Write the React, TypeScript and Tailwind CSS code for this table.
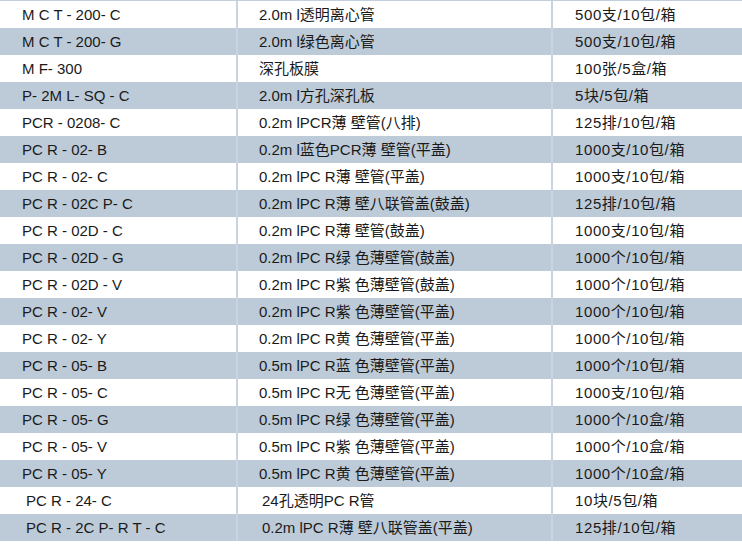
import React from "react";

const rows: [string, string, string][] = [
  ["M C T - 200- C", "2.0m l透明离心管", "500支/10包/箱"],
  ["M C T - 200- G", "2.0m l绿色离心管", "500支/10包/箱"],
  ["M F- 300", "深孔板膜", "100张/5盒/箱"],
  ["P- 2M L- SQ - C", "2.0m l方孔深孔板", "5块/5包/箱"],
  ["PCR - 0208- C", "0.2m lPCR薄 壁管(八排)", "125排/10包/箱"],
  ["PC R - 02- B", "0.2m l蓝色PCR薄 壁管(平盖)", "1000支/10包/箱"],
  ["PC R - 02- C", "0.2m lPC R薄 壁管(平盖)", "1000支/10包/箱"],
  ["PC R - 02C P- C", "0.2m lPC R薄 壁八联管盖(鼓盖)", "125排/10包/箱"],
  ["PC R - 02D - C", "0.2m lPC R薄 壁管(鼓盖)", "1000支/10包/箱"],
  ["PC R - 02D - G", "0.2m lPC R绿 色薄壁管(鼓盖)", "1000个/10包/箱"],
  ["PC R - 02D - V", "0.2m lPC R紫 色薄壁管(鼓盖)", "1000个/10包/箱"],
  ["PC R - 02- V", "0.2m lPC R紫 色薄壁管(平盖)", "1000个/10包/箱"],
  ["PC R - 02- Y", "0.2m lPC R黄 色薄壁管(平盖)", "1000个/10包/箱"],
  ["PC R - 05- B", "0.5m lPC R蓝 色薄壁管(平盖)", "1000个/10包/箱"],
  ["PC R - 05- C", "0.5m lPC R无 色薄壁管(平盖)", "1000支/10包/箱"],
  ["PC R - 05- G", "0.5m lPC R绿 色薄壁管(平盖)", "1000个/10盒/箱"],
  ["PC R - 05- V", "0.5m lPC R紫 色薄壁管(平盖)", "1000个/10盒/箱"],
  ["PC R - 05- Y", "0.5m lPC R黄 色薄壁管(平盖)", "1000个/10盒/箱"],
  ["PC R - 24- C", "24孔透明PC R管", "10块/5包/箱"],
  ["PC R - 2C P- R T - C", "0.2m lPC R薄 壁八联管盖(平盖)", "125排/10包/箱"],
];

export default function App() {
  return (
    <div
      className="w-[742px] h-[546px] bg-white overflow-hidden text-[15px] text-[#1a1a1a]"
      style={{ fontFamily: '"Liberation Sans", "Noto Sans CJK SC", sans-serif' }}
    >
      <div className="border-t border-[#c3cfdc]">
        {rows.map((r, i) => {
          const band = i % 2 === 1;
          const late = i >= 18;
          return (
            <div
              key={i}
              className={`grid grid-cols-[238px_315px_1fr] h-[27px] ${
                band ? "bg-[#bdcad8]" : "bg-white"
              }`}
            >
              <div
                className={`h-full flex items-center pt-[2px] border-r-2 border-[#cad4e0] ${
                  late ? "pl-[26px]" : "pl-[22px]"
                }`}
              >
                {r[0]}
              </div>
              <div
                className={`h-full flex items-center pt-[2px] border-r-2 border-[#cad4e0] ${
                  late ? "pl-[24px]" : "pl-[21px]"
                }`}
              >
                {r[1]}
              </div>
              <div className="h-full flex items-center pt-[2px] pl-[22px] tracking-[0.6px]">
                {r[2]}
              </div>
            </div>
          );
        })}
      </div>
    </div>
  );
}
